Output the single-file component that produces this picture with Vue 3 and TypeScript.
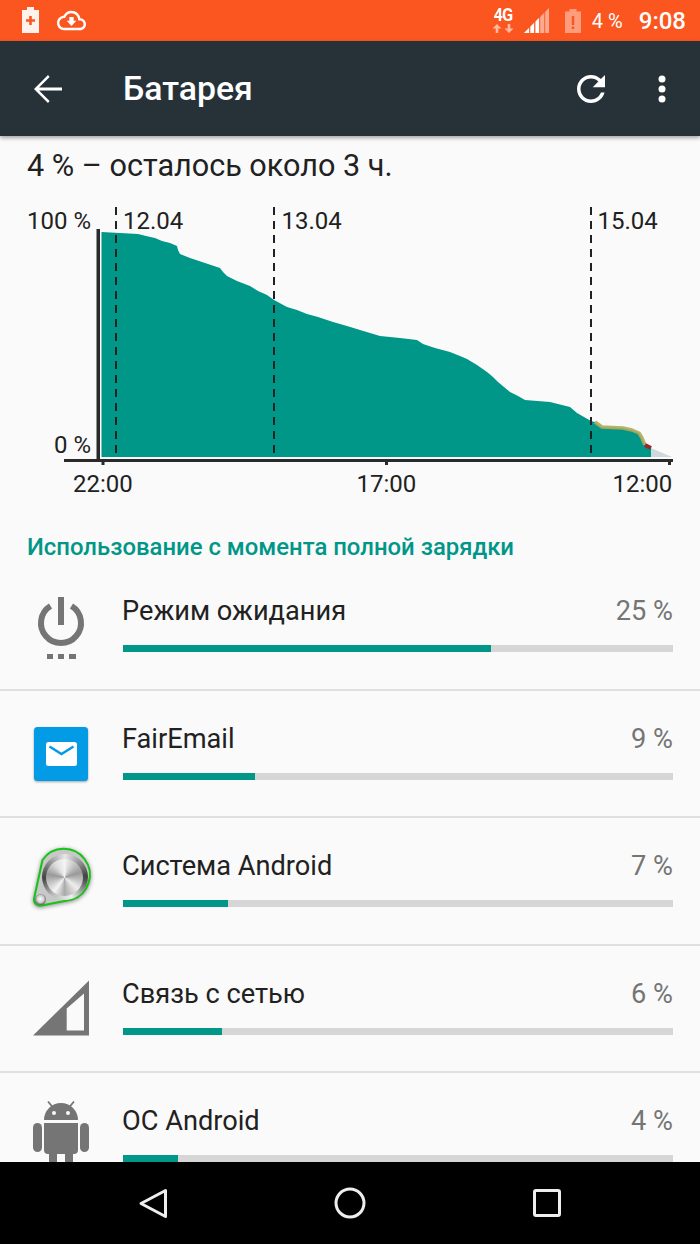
<template>
  <div class="screen">
    <!-- Status bar -->
    <header class="statusbar">
      <svg class="st-batt-plus" viewBox="0 0 17 26">
        <path d="M5 0h7v3h5v23H0V3h5z" fill="#fff2ec" />
        <path d="M7.200 9h2.600v3.200H13v2.600H9.800V18H7.200v-3.200H4v-2.600h3.200z" fill="#fb5620" />
      </svg>
      <svg class="st-cloud" viewBox="0 0 24 24">
        <path fill="#fff" d="M19.350 10.040C18.670 6.590 15.640 4 12 4 9.110 4 6.600 5.640 5.350 8.040 2.340 8.360 0 10.910 0 14c0 3.310 2.690 6 6 6h13c2.760 0 5-2.240 5-5 0-2.640-2.050-4.780-4.650-4.960zM19 18H6c-2.210 0-4-1.790-4-4s1.790-4 4-4h.71C7.370 7.690 9.480 6 12 6c3.040 0 5.500 2.460 5.500 5.500v.5H19c1.660 0 3 1.340 3 3s-1.340 3-3 3z" />
        <path fill="#fff" d="M10.200 9h3.600v3.200H16l-4 4.400-4-4.400h2.200z" />
      </svg>
      <div class="st-spacer"></div>
      <div class="st-net">
        <span class="st-4g">4G</span>
        <svg class="st-arrows" viewBox="0 0 22 9">
          <path fill="#ffb79f" d="M5 0l4.500 4.500H6.300V9H3.700V4.500H.5zM17 9l-4.500-4.500h3.200V0h2.600v4.500h3.200z" />
        </svg>
      </div>
      <svg class="st-signal" viewBox="0 0 25 25">
        <path fill="#fdab90" d="M25 0v25H0z" />
        <path fill="#fff" d="M0 25l5-5v5zM6.500 18.500l3.500-3.500v10H6.500zM11.500 13.500L15 10v15h-3.500z" />
        <path fill="#fb5620" d="M5.300 0h.8v25h-.8zM10.300 0h.9v25h-.9zM15.300 0h.9v25h-.9zM20.300 0h.9v25h-.9z" />
      </svg>
      <svg class="st-batt-alert" viewBox="0 0 16 24">
        <path d="M4.500 0h7v2.500H16V24H0V2.500h4.500z" fill="#fd9d7d" />
        <path d="M6.800 7h2.400v9H6.800zM6.800 17.500h2.400V20H6.800z" fill="#fb5620" />
      </svg>
      <span class="st-pct">4 %</span>
      <span class="st-time">9:08</span>
    </header>

    <!-- Toolbar -->
    <div class="toolbar">
      <svg class="tb-back" viewBox="0 0 24 24">
        <path fill="#fff" d="M20 11.200H6.900l6-6L12 4l-8 8 8 8 .9-1.200-6-6H20z" />
      </svg>
      <h1 class="tb-title">Батарея</h1>
      <svg class="tb-refresh" viewBox="0 0 24 24">
        <path fill="#fff" d="M17.650 6.350C16.200 4.900 14.210 4 12 4c-4.420 0-7.990 3.580-7.990 8s3.570 8 7.990 8c3.730 0 6.840-2.550 7.730-6h-2.080c-.82 2.330-3.040 4-5.650 4-3.310 0-6-2.690-6-6s2.690-6 6-6c1.660 0 3.140.69 4.220 1.780L13 11h7V4l-2.350 2.350z" />
      </svg>
      <svg class="tb-more" viewBox="0 0 10 32">
        <circle cx="5" cy="6" r="3.500" fill="#fff" />
        <circle cx="5" cy="16" r="3.500" fill="#fff" />
        <circle cx="5" cy="26" r="3.500" fill="#fff" />
      </svg>
    </div>

    <main class="content">
      <p class="summary">4 % – осталось около 3 ч.</p>

      <!-- Chart, drawn in page coordinates -->
      <svg class="chart" viewBox="0 200 700 300">
        <polygon :points="fillPoints" fill="#009688" />
        <polygon points="651,448 672,457 651,457" fill="#cfd8dc" />
        <polyline :points="warnLine" fill="none" stroke="#b3ab5c" stroke-opacity=".9" stroke-width="3.500" stroke-linejoin="round" />
        <polyline points="645,445 651,448" fill="none" stroke="#98282a" stroke-width="4" />

        <line v-for="x in [116, 274, 591]" :key="x" :x1="x" :x2="x" y1="207" y2="457"
          stroke="#212121" stroke-width="2" stroke-dasharray="8 6" />

        <rect x="96.500" y="229" width="3.500" height="233" fill="#2a2a2a" />
        <rect x="64" y="459" width="609" height="3" fill="#2a2a2a" />
        <rect v-for="x in [101.500, 385, 668]" :key="x" :x="x" y="461" width="3" height="4" fill="#2a2a2a" />

        <text x="91" y="229" text-anchor="end" class="ch-text">100 %</text>
        <text x="91" y="453" text-anchor="end" class="ch-text">0 %</text>
        <text x="123" y="229" class="ch-text">12.04</text>
        <text x="281.500" y="229" class="ch-text">13.04</text>
        <text x="597.500" y="229" class="ch-text">15.04</text>
        <text x="73" y="492" class="ch-text">22:00</text>
        <text x="356.500" y="492" class="ch-text">17:00</text>
        <text x="612.500" y="492" class="ch-text">12:00</text>
      </svg>

      <h2 class="section">Использование с момента полной зарядки</h2>

      <div class="list">
        <div v-for="row in rows" :key="row.name" class="row">
          <div class="icon">
            <svg v-if="row.icon === 'power'" viewBox="0 0 72 72">
              <path d="M25.500 16A20 20 0 1 0 46.500 16" fill="none" stroke="#757575" stroke-width="6" />
              <path d="M33 7h6v28h-6zM22 64h6v5h-6zM33 64h6v5h-6zM44 64h7v5h-7z" fill="#757575" />
            </svg>

            <svg v-else-if="row.icon === 'mail'" viewBox="0 0 72 72">
              <rect class="mail-bg" x="9" y="9" width="54" height="54" rx="3.500" fill="#039be5" />
              <rect x="21" y="24" width="31" height="24" rx="2.500" fill="#fff" />
              <path d="M24.500 28.500L36.500 36l12-7.500" fill="none" stroke="#039be5" stroke-width="2.500" />
            </svg>

            <template v-else-if="row.icon === 'system'">
              <svg viewBox="0 0 72 72">
                <defs>
                  <radialGradient id="drop" cx="50%" cy="45%" r="55%">
                    <stop offset="0" stop-color="#fff" />
                    <stop offset=".6" stop-color="#ccc" />
                    <stop offset="1" stop-color="#555" />
                  </radialGradient>
                </defs>
                <path class="tear" d="M17.500 15L9 54A6 6 0 0 0 16.500 60.500L47 54.500A26 26 0 1 0 17.500 15Z"
                  fill="#c8c8c8" stroke="#16c416" stroke-width="2" />
                <circle cx="15.500" cy="54.500" r="5.500" fill="url(#drop)" />
              </svg>
              <div class="disk"><div class="disk-inner"></div></div>
            </template>

            <svg v-else-if="row.icon === 'signal'" viewBox="0 0 72 72">
              <path fill="#757575" fill-rule="evenodd" d="M8 62.500L64 7.500v55zM41.700 57.500h17.300v-37L41.700 35.500z" />
            </svg>

            <svg v-else viewBox="0 0 72 72">
              <path fill="#757575" d="M19 20a17 17 0 0 1 34 0zM19 23h34v27a4 4 0 0 1-4 4H23a4 4 0 0 1-4-4zM24 52h8v20h-8zM40 52h8v20h-8z" />
              <rect x="8" y="23" width="9" height="29" rx="4.500" fill="#757575" />
              <rect x="55" y="23" width="9" height="29" rx="4.500" fill="#757575" />
              <path d="M28 7.500l-5-6M44 7.500l5-6" stroke="#757575" stroke-width="1.800" />
              <circle cx="29" cy="13" r="2" fill="#fafafa" />
              <circle cx="43" cy="13" r="2" fill="#fafafa" />
            </svg>
          </div>

          <div class="row-main">
            <div class="row-top">
              <span class="row-name">{{ row.name }}</span>
              <span class="row-pct">{{ row.pct }} %</span>
            </div>
            <div class="track">
              <div class="bar" :style="{ width: row.bar + 'px' }"></div>
            </div>
          </div>
        </div>
      </div>
    </main>

    <!-- Navigation bar -->
    <nav class="navbar">
      <svg class="nav-icon" viewBox="0 0 32 32">
        <path d="M28.500 3.500v26L4 16.500z" fill="none" stroke="#eee" stroke-width="3" stroke-linejoin="round" />
      </svg>
      <svg class="nav-icon" viewBox="0 0 32 32">
        <circle cx="16" cy="16" r="14" fill="none" stroke="#eee" stroke-width="3" />
      </svg>
      <svg class="nav-icon" viewBox="0 0 32 32">
        <rect x="3.500" y="3.500" width="25" height="25" rx="1.500" fill="none" stroke="#eee" stroke-width="3" />
      </svg>
    </nav>
  </div>
</template>

<script setup lang="ts">
interface Row { name: string; pct: number; bar: number; icon: string }

const rows: Row[] = [
  { name: 'Режим ожидания', pct: 25, bar: 368, icon: 'power' },
  { name: 'FairEmail', pct: 9, bar: 132, icon: 'mail' },
  { name: 'Система Android', pct: 7, bar: 105, icon: 'system' },
  { name: 'Связь с сетью', pct: 6, bar: 99, icon: 'signal' },
  { name: 'ОС Android', pct: 4, bar: 55, icon: 'android' },
]

const curve = [
  [101.5, 232], [138, 234], [146, 236], [155, 238], [162, 241], [170, 243], [177, 246], [178, 250], [180, 254],
  [190, 258], [205, 263], [220, 268], [223, 272], [227, 276], [237, 281], [250, 286], [258, 291], [267, 295],
  [274, 300], [287, 307], [297, 310], [307, 314], [318, 317], [333, 322], [347, 326], [360, 330], [370, 333],
  [380, 336], [400, 338], [417, 340], [423, 344], [435, 348], [450, 352], [460, 356], [467, 359], [477, 365],
  [487, 372], [493, 377], [498, 382], [510, 392], [518, 396], [525, 400], [550, 402], [570, 407], [577, 413],
  [591, 421], [595, 422], [602, 427], [612, 427.5], [623, 428], [632, 430], [639, 433], [642, 438], [645, 445], [651, 448],
]

const fillPoints = [...curve, [651, 457], [101.5, 457]].map(p => p.join(',')).join(' ')
const warnLine = curve.filter(p => p[0] >= 595 && p[0] <= 645).map(p => p.join(',')).join(' ')
</script>

<style scoped>
.screen {
  width: 700px;
  height: 1244px;
  display: flex;
  flex-direction: column;
  overflow: hidden;
  background: #fafafa;
  color: #212121;
  font-family: Roboto, "Noto Sans", sans-serif;
}

/* Status bar */
.statusbar {
  height: 41px;
  flex-shrink: 0;
  display: flex;
  align-items: center;
  background: #fb5620;
  color: #fff;
  padding: 0 14px 0 22px;
  box-sizing: border-box;
}
.st-batt-plus { width: 17px; height: 26px; margin-top: -1px; }
.st-cloud { width: 29px; height: 29px; margin-left: 18px; margin-top: -1px; }
.st-spacer { flex: 1; }
.st-net { width: 22px; display: flex; flex-direction: column; align-items: center; margin-top: -2px; margin-right: 1px; }
.st-4g { font-size: 19px; line-height: 17px; font-weight: 700; letter-spacing: -1px; transform: scaleX(.86); }
.st-arrows { width: 22px; height: 9px; margin-top: 1px; }
.st-signal { width: 25px; height: 25px; margin-left: 9px; margin-top: -1px; }
.st-batt-alert { width: 16px; height: 24px; margin-left: 16px; }
.st-pct { font-size: 20px; margin-left: 11px; width: 30px; white-space: nowrap; }
.st-time { font-size: 24px; font-weight: 500; margin-left: 17px; }

/* Toolbar */
.toolbar {
  height: 95px;
  flex-shrink: 0;
  display: flex;
  align-items: center;
  background: #263238;
  padding: 0 0 0 27px;
  box-sizing: border-box;
  box-shadow: 0 2px 4px rgba(0, 0, 0, .35);
  position: relative;
  z-index: 1;
}
.tb-back { width: 42px; height: 42px; }
.tb-title {
  margin: 0 0 0 54px;
  font-size: 33.800px;
  font-weight: 500;
  color: #fff;
  flex: 1;
}
.tb-refresh { width: 42px; height: 42px; }
.tb-more { width: 10px; height: 32px; margin-left: 45px; margin-right: 33px; }

/* Content */
.content {
  flex: 1;
  min-height: 0;
  overflow: hidden;
}
.summary {
  height: 64px;
  margin: 0;
  padding: 12px 0 0 27px;
  box-sizing: border-box;
  font-size: 30.600px;
  line-height: 36px;
}
.chart { display: block; width: 700px; height: 300px; }
.ch-text { font-size: 24px; fill: #212121; }

.section {
  height: 63px;
  margin: 0;
  padding: 31px 0 0 27px;
  box-sizing: border-box;
  font-size: 23.900px;
  line-height: 32px;
  font-weight: 500;
  color: #009688;
}

.row {
  height: 127.500px;
  box-sizing: border-box;
  border-bottom: 2px solid #e0e0e0;
  display: flex;
  padding-left: 25px;
}
.icon {
  width: 72px;
  height: 72px;
  margin-top: 27px;
  flex-shrink: 0;
  position: relative;
}
.icon svg { display: block; width: 72px; height: 72px; overflow: visible; }
.mail-bg { filter: drop-shadow(0 1px 1px rgba(0, 0, 0, .35)); }
.tear { filter: drop-shadow(0 1px 2px rgba(0, 0, 0, .45)); }
.disk {
  position: absolute;
  left: 16.500px;
  top: 9px;
  width: 46px;
  height: 46px;
  border-radius: 50%;
  display: flex;
  align-items: center;
  justify-content: center;
  background: conic-gradient(#e8e8e8, #444 24%, #555 28%, #eee 45%, #bbb 60%, #444 74%, #555 78%, #e8e8e8);
}
.disk-inner {
  width: 37px;
  height: 37px;
  border-radius: 50%;
  background: conic-gradient(#f4f4f4, #999 20%, #eee 36%, #aaa 50%, #f4f4f4 60%, #999 78%, #ddd 90%, #f4f4f4);
}

.row-main {
  width: 550px;
  margin-left: 26px;
  padding-top: 29px;
}
.row-top {
  display: flex;
  justify-content: space-between;
  align-items: center;
  height: 38px;
  font-size: 27.200px;
  line-height: 38px;
}
.row-name { margin-left: -1px; }
.row-pct { color: #757575; }
.track {
  height: 7px;
  margin-top: 15px;
  background: #d6d6d6;
}
.bar { height: 100%; background: #009688; }

/* Navigation bar */
.navbar {
  height: 82px;
  flex-shrink: 0;
  background: #000;
  display: flex;
  align-items: center;
  justify-content: space-between;
  padding: 0 137px 0 137px;
  box-sizing: border-box;
  position: relative;
}
.nav-icon { width: 32px; height: 32px; }
</style>
